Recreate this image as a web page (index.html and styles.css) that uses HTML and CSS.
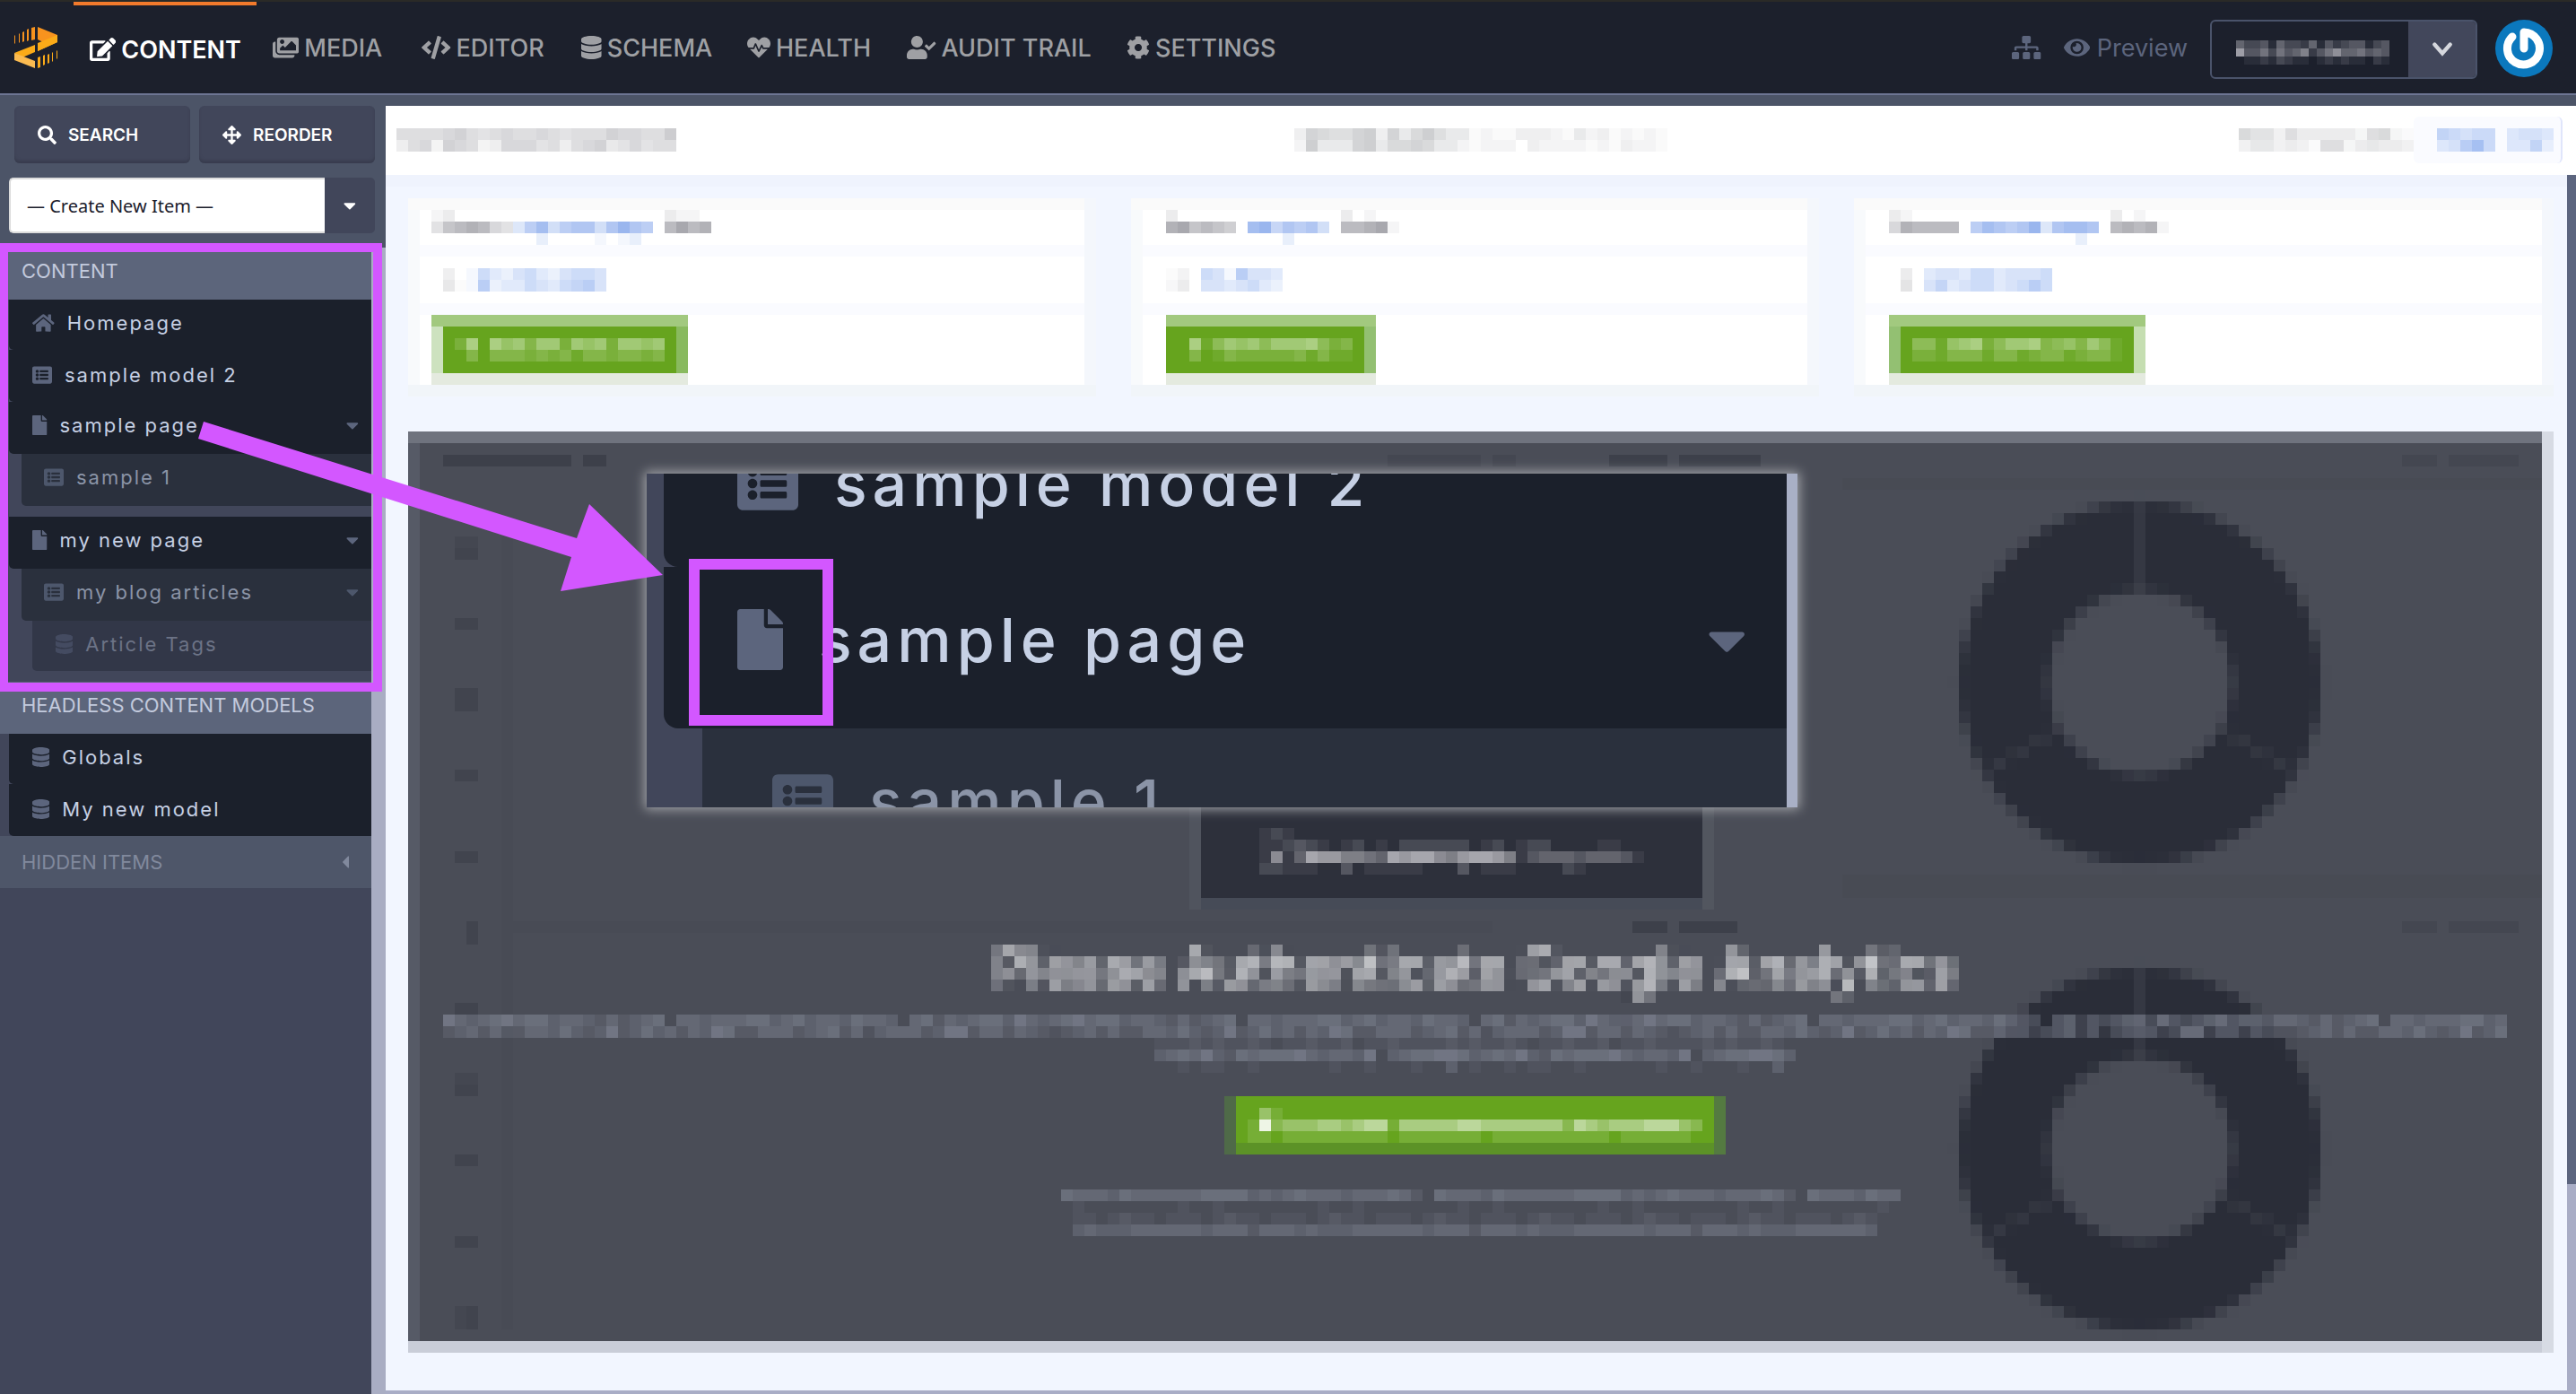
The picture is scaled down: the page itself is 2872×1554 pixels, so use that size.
FILE: index.html
```html
<!DOCTYPE html>
<html lang="en">
<head>
<meta charset="utf-8">
<meta name="viewport" content="width=device-width, initial-scale=1">
<title>Content</title>
<link rel="stylesheet" href="styles.css">
<script src="mosaic.js" defer></script>
</head>
<body>

<svg class="sprite" aria-hidden="true">
  <defs>
    <symbol id="i-edit" viewBox="0 0 576 512"><path d="M402.6 83.2l90.2 90.2c3.8 3.8 3.8 10 0 13.8L274.4 405.6l-92.8 10.3c-12.4 1.4-22.9-9.1-21.5-21.5l10.3-92.8L388.8 83.2c3.8-3.8 10-3.8 13.8 0zm162-22.9l-48.8-48.8c-15.2-15.2-39.9-15.2-55.2 0l-35.4 35.4c-3.8 3.8-3.8 10 0 13.8l90.2 90.2c3.8 3.8 10 3.8 13.8 0l35.4-35.4c15.2-15.3 15.2-40 0-55.2zM384 346.2V448H64V128h229.8c3.2 0 6.2-1.3 8.5-3.5l40-40c7.6-7.6 2.2-20.5-8.5-20.5H48C21.5 64 0 85.5 0 112v352c0 26.5 21.5 48 48 48h352c26.5 0 48-21.5 48-48V306.2c0-10.7-12.9-16-20.5-8.5l-40 40c-2.2 2.3-3.5 5.3-3.5 8.5z"/></symbol>
    <symbol id="i-images" viewBox="0 0 576 512"><path d="M480 416v16c0 26.51-21.49 48-48 48H48c-26.51 0-48-21.49-48-48V176c0-26.51 21.49-48 48-48h16v208c0 44.112 35.888 80 80 80h336zm96-80V80c0-26.51-21.49-48-48-48H144c-26.51 0-48 21.49-48 48v256c0 26.51 21.49 48 48 48h384c26.51 0 48-21.49 48-48zM256 128c0 26.51-21.49 48-48 48s-48-21.49-48-48 21.49-48 48-48 48 21.49 48 48zm-96 144l55.515-55.515c4.686-4.686 12.284-4.686 16.971 0L272 256l135.515-135.515c4.686-4.686 12.284-4.686 16.971 0L512 208v112H160v-48z"/></symbol>
    <symbol id="i-code" viewBox="0 0 640 512"><path d="M278.9 511.5l-61-17.7c-6.4-1.8-10-8.5-8.2-14.9L346.2 8.7c1.8-6.4 8.5-10 14.9-8.2l61 17.7c6.4 1.8 10 8.5 8.2 14.9L293.8 503.3c-1.9 6.4-8.5 10.1-14.9 8.2zm-114-112.2l43.5-46.4c4.6-4.9 4.3-12.7-.8-17.2L117 256l90.6-79.7c5.1-4.5 5.5-12.3.8-17.2l-43.5-46.4c-4.5-4.8-12.1-5.1-17-.5L3.8 247.2c-5.1 4.7-5.1 12.8 0 17.5l144.1 135.1c4.9 4.6 12.5 4.4 17-.5zm327.2.6l144.1-135.1c5.1-4.7 5.1-12.8 0-17.5L492.1 112.1c-4.8-4.5-12.4-4.3-17 .5L431.6 159c-4.6 4.9-4.3 12.7.8 17.2L523 256l-90.6 79.7c-5.1 4.5-5.5 12.3-.8 17.2l43.5 46.4c4.5 4.9 12.1 5.1 17 .6z"/></symbol>
    <symbol id="i-database" viewBox="0 0 448 512"><path d="M448 73.143v45.714C448 159.143 347.667 192 224 192S0 159.143 0 118.857V73.143C0 32.857 100.333 0 224 0s224 32.857 224 73.143zM448 176v102.857C448 319.143 347.667 352 224 352S0 319.143 0 278.857V176c48.125 33.143 136.208 48.572 224 48.572S399.874 209.143 448 176zm0 160v102.857C448 479.143 347.667 512 224 512S0 479.143 0 438.857V336c48.125 33.143 136.208 48.572 224 48.572S399.874 369.143 448 336z"/></symbol>
    <symbol id="i-heartbeat" viewBox="0 0 512 512"><path d="M320.2 243.8l-49.7 99.4c-6 12.1-23.4 11.7-28.9-.6l-56.9-126.3-30 71.7H60.6l182.5 186.5c7.1 7.3 18.6 7.3 25.7 0L451.4 288H342.3l-22.1-44.2zM473.7 73.9l-2.4-2.5c-51.5-52.6-135.8-52.6-187.4 0L256 100l-27.9-28.5c-51.5-52.7-135.9-52.7-187.4 0l-2.4 2.4C-10.4 123.7-12.5 203 31 256h102.4l35.9-86.2c5.4-12.9 23.6-13.1 29.4-.3l58.2 129.3 49-97.9c5.9-11.8 22.7-11.8 28.6 0l27.6 55.2H481c43.5-53 41.4-132.3-7.3-182.2z"/></symbol>
    <symbol id="i-usercheck" viewBox="0 0 640 512"><path d="M224 256c70.7 0 128-57.3 128-128S294.7 0 224 0 96 57.3 96 128s57.3 128 128 128zm89.6 32h-16.7c-22.2 10.2-46.9 16-72.9 16s-50.6-5.8-72.9-16h-16.7C60.2 288 0 348.2 0 422.4V464c0 26.5 21.5 48 48 48h352c26.5 0 48-21.5 48-48v-41.6c0-74.2-60.2-134.4-134.4-134.4zm323-128.4l-27.8-28.1c-4.6-4.7-12.1-4.7-16.8-.1l-104.8 104-45.5-45.8c-4.6-4.7-12.1-4.7-16.8-.1l-28.1 27.9c-4.7 4.6-4.7 12.1-.1 16.8l81.7 82.3c4.6 4.7 12.1 4.7 16.8.1l141.3-140.2c4.6-4.7 4.7-12.2.1-16.8z"/></symbol>
    <symbol id="i-cog" viewBox="0 0 512 512"><path d="M487.4 315.7l-42.6-24.6c4.3-23.2 4.3-47 0-70.2l42.6-24.6c4.9-2.8 7.1-8.6 5.5-14-11.1-35.6-30-67.8-54.7-94.6-3.8-4.1-10-5.1-14.8-2.3L380.8 110c-17.9-15.4-38.5-27.3-60.8-35.1V25.8c0-5.6-3.9-10.5-9.4-11.7-36.7-8.2-74.3-7.8-109.2 0-5.5 1.2-9.4 6.1-9.4 11.7V75c-22.2 7.9-42.8 19.8-60.8 35.1L88.7 85.5c-4.9-2.8-11-1.9-14.8 2.3-24.7 26.7-43.6 58.9-54.7 94.6-1.7 5.4.6 11.2 5.5 14L67.3 221c-4.3 23.2-4.3 47 0 70.2l-42.6 24.6c-4.9 2.8-7.1 8.6-5.5 14 11.1 35.6 30 67.8 54.7 94.6 3.8 4.1 10 5.1 14.8 2.3l42.6-24.6c17.9 15.4 38.5 27.3 60.8 35.1v49.2c0 5.6 3.9 10.5 9.4 11.7 36.7 8.2 74.3 7.8 109.2 0 5.5-1.2 9.4-6.1 9.4-11.7v-49.2c22.2-7.9 42.8-19.8 60.8-35.1l42.6 24.6c4.9 2.8 11 1.9 14.8-2.3 24.7-26.7 43.6-58.9 54.7-94.6 1.5-5.5-.7-11.3-5.6-14.1zM256 336c-44.1 0-80-35.9-80-80s35.9-80 80-80 80 35.9 80 80-35.9 80-80 80z"/></symbol>
    <symbol id="i-sitemap" viewBox="0 0 640 512"><path d="M128 352H32c-17.67 0-32 14.33-32 32v96c0 17.67 14.33 32 32 32h96c17.67 0 32-14.33 32-32v-96c0-17.67-14.33-32-32-32zm-24-80h192v48h48v-48h192v48h48v-57.59c0-21.17-17.23-38.41-38.41-38.41H344v-64h40c17.67 0 32-14.33 32-32V32c0-17.67-14.33-32-32-32H256c-17.67 0-32 14.33-32 32v96c0 17.67 14.33 32 32 32h40v64H94.41C73.23 224 56 241.23 56 262.41V320h48v-48zm264 80h-96c-17.67 0-32 14.33-32 32v96c0 17.67 14.33 32 32 32h96c17.67 0 32-14.33 32-32v-96c0-17.67-14.33-32-32-32zm240 0h-96c-17.67 0-32 14.33-32 32v96c0 17.67 14.33 32 32 32h96c17.67 0 32-14.33 32-32v-96c0-17.67-14.33-32-32-32z"/></symbol>
    <symbol id="i-eye" viewBox="0 0 576 512"><path d="M572.52 241.4C518.29 135.59 410.93 64 288 64S57.68 135.64 3.48 241.41a32.35 32.35 0 0 0 0 29.19C57.71 376.41 165.07 448 288 448s230.32-71.64 284.52-177.41a32.35 32.35 0 0 0 0-29.19zM288 400a144 144 0 1 1 144-144 143.93 143.93 0 0 1-144 144zm0-240a95.31 95.31 0 0 0-25.31 3.79 47.85 47.85 0 0 1-66.9 66.9A95.78 95.78 0 1 0 288 160z"/></symbol>
    <symbol id="i-home" viewBox="0 0 576 512"><path d="M280.37 148.26L96 300.11V464a16 16 0 0 0 16 16l112.06-.29a16 16 0 0 0 15.92-16V368a16 16 0 0 1 16-16h64a16 16 0 0 1 16 16v95.64a16 16 0 0 0 16 16.05L464 480a16 16 0 0 0 16-16V300L295.67 148.26a12.19 12.19 0 0 0-15.3 0zM571.6 251.47L488 182.56V44.05a12 12 0 0 0-12-12h-56a12 12 0 0 0-12 12v72.61L318.47 43a48 48 0 0 0-61 0L4.34 251.47a12 12 0 0 0-1.6 16.9l25.5 31A12 12 0 0 0 45.15 301l235.22-193.74a12.19 12.19 0 0 1 15.3 0L530.9 301a12 12 0 0 0 16.9-1.6l25.5-31a12 12 0 0 0-1.7-16.93z"/></symbol>
    <symbol id="i-list" viewBox="0 0 512 512"><path d="M464 480H48c-26.51 0-48-21.49-48-48V80c0-26.51 21.49-48 48-48h416c26.51 0 48 21.49 48 48v352c0 26.51-21.49 48-48 48zM128 120c-22.091 0-40 17.909-40 40s17.909 40 40 40 40-17.909 40-40-17.909-40-40-40zm0 96c-22.091 0-40 17.909-40 40s17.909 40 40 40 40-17.909 40-40-17.909-40-40-40zm0 96c-22.091 0-40 17.909-40 40s17.909 40 40 40 40-17.909 40-40-17.909-40-40-40zm288-136v-32c0-6.627-5.373-12-12-12H204c-6.627 0-12 5.373-12 12v32c0 6.627 5.373 12 12 12h200c6.627 0 12-5.373 12-12zm0 96v-32c0-6.627-5.373-12-12-12H204c-6.627 0-12 5.373-12 12v32c0 6.627 5.373 12 12 12h200c6.627 0 12-5.373 12-12zm0 96v-32c0-6.627-5.373-12-12-12H204c-6.627 0-12 5.373-12 12v32c0 6.627 5.373 12 12 12h200c6.627 0 12-5.373 12-12z"/></symbol>
    <symbol id="i-file" viewBox="0 0 384 512"><path d="M224 136V0H24C10.7 0 0 10.7 0 24v464c0 13.3 10.7 24 24 24h336c13.3 0 24-10.7 24-24V160H248c-13.2 0-24-10.8-24-24zm160-14.1v6.1H256V0h6.1c6.4 0 12.5 2.5 17 7l97.9 98c4.5 4.5 7 10.6 7 16.9z"/></symbol>
    <symbol id="i-search" viewBox="0 0 512 512"><path d="M505 442.7L405.3 343c-4.5-4.5-10.6-7-17-7H372c27.6-35.3 44-79.7 44-128C416 93.1 322.9 0 208 0S0 93.1 0 208s93.1 208 208 208c48.3 0 92.7-16.4 128-44v16.3c0 6.4 2.5 12.5 7 17l99.7 99.7c9.4 9.4 24.6 9.4 33.9 0l28.3-28.3c9.4-9.4 9.4-24.6.1-34zM208 336c-70.7 0-128-57.2-128-128 0-70.7 57.2-128 128-128 70.7 0 128 57.2 128 128 0 70.7-57.2 128-128 128z"/></symbol>
    <symbol id="i-arrows" viewBox="0 0 512 512"><path d="M352.201 425.775l-79.196 79.196c-9.373 9.373-24.568 9.373-33.941 0l-79.196-79.196c-15.119-15.119-4.411-40.971 16.971-40.97h51.162L228 284H127.196v51.162c0 21.382-25.851 32.09-40.971 16.971L7.029 272.937c-9.373-9.373-9.373-24.569 0-33.941L86.225 159.8c15.119-15.119 40.971-4.411 40.971 16.971V228H228V127.196h-51.23c-21.382 0-32.09-25.851-16.971-40.971l79.196-79.196c9.373-9.373 24.568-9.373 33.941 0l79.196 79.196c15.119 15.119 4.411 40.971-16.971 40.971h-51.162V228h100.804v-51.162c0-21.382 25.851-32.09 40.97-16.971l79.196 79.196c9.373 9.373 9.373 24.569 0 33.941L425.773 352.2c-15.119 15.119-40.971 4.411-40.97-16.971V284H284v100.804h51.23c21.382 0 32.09 25.851 16.971 40.971z"/></symbol>
    <symbol id="i-caret" viewBox="0 0 320 512"><path d="M31.3 192h257.3c17.8 0 26.7 21.5 14.1 34.1L174.1 354.7c-7.8 7.8-20.5 7.8-28.3 0L17.2 226.1C4.6 213.5 13.5 192 31.3 192z"/></symbol>
    <symbol id="i-caretleft" viewBox="0 0 192 512"><path d="M192 127.338v257.324c0 17.818-21.543 26.741-34.142 14.142L29.196 270.142c-7.81-7.81-7.81-20.474 0-28.284l128.662-128.662c12.599-12.6 34.142-3.676 34.142 14.142z"/></symbol>
    <filter id="pixelate" x="0" y="0" width="1" height="1" primitiveUnits="userSpaceOnUse" color-interpolation-filters="sRGB">
      <feGaussianBlur in="SourceGraphic" stdDeviation="3" result="soft"/>
      <feFlood x="6" y="6" width="1" height="1" flood-color="#000"/>
      <feComposite x="0" y="0" width="13" height="13"/>
      <feTile result="dots"/>
      <feComposite in="soft" in2="dots" operator="in"/>
      <feMorphology operator="dilate" radius="6"/>
    </filter>
  </defs>
</svg>

<header class="topbar">
  <a class="logo" href="#" aria-label="Home">
    <svg viewBox="0 0 48 46" aria-hidden="true">
      <path fill="#f7931e" d="M26 0l22 9v1L32 17l-6-3z"/>
      <path fill="#fbab18" d="M48 9v8L26 27v-8l10-4zM23 20v8L9 34 0 29z"/>
      <path fill="#fbab18" d="M48 9v8L26 27v-9z"/>
      <path fill="#fbbb51" d="M0 29l23 9v8L0 37z"/>
      <path fill="#f7931e" d="M19 1l4-1v14l-4 1zM14 3l2-1v13l-2 1zM9 6l2-1v11l-2 1zM5 8l1-1v10l-1 1zM0 10l1-1v9l-1 1z"/>
      <path fill="#fbab18" d="M26 34l3-1v12l-3 1zM32 32l2-1v11l-2 1zM37 31l2-1v10l-2 1zM42 29l1-1v10l-1 1zM47 27l1-1v9l-1 1z"/>
    </svg>
  </a>
  <nav class="mainnav">
    <a class="mainnav__item mainnav__item--active" href="#"><svg class="icon icon--576"><use href="#i-edit"/></svg>CONTENT</a>
    <a class="mainnav__item" href="#"><svg class="icon icon--576"><use href="#i-images"/></svg>MEDIA</a>
    <a class="mainnav__item" href="#"><svg class="icon icon--640"><use href="#i-code"/></svg>EDITOR</a>
    <a class="mainnav__item" href="#"><svg class="icon icon--448"><use href="#i-database"/></svg>SCHEMA</a>
    <a class="mainnav__item" href="#"><svg class="icon"><use href="#i-heartbeat"/></svg>HEALTH</a>
    <a class="mainnav__item" href="#"><svg class="icon icon--640"><use href="#i-usercheck"/></svg>AUDIT TRAIL</a>
    <a class="mainnav__item" href="#"><svg class="icon"><use href="#i-cog"/></svg>SETTINGS</a>
  </nav>
  <div class="tools">
    <a class="tools__link" href="#" aria-label="Sitemap"><svg class="icon icon--640"><use href="#i-sitemap"/></svg></a>
    <a class="tools__link" href="#"><svg class="icon icon--576"><use href="#i-eye"/></svg>Preview</a>
    <button class="instance" type="button" aria-label="Switch instance">
      <span class="instance__name"><canvas class="mosaic" data-cell="9" data-ink="#9d9da6" data-rows="5334153325142344134|9446364572468556454|0112132110121211021"></canvas></span>
      <span class="instance__arrow"><svg viewBox="0 0 22 16" aria-hidden="true"><path d="M3 3l8 9 8-9"/></svg></span>
    </button>
    <a class="avatar" href="#" aria-label="Account"><svg viewBox="0 0 64 64" aria-hidden="true"><circle cx="32" cy="32" r="32" fill="#0b78bd"/><path d="M32 32V14a18 18 0 1 1-13 5" fill="none" stroke="#fff" stroke-width="9" stroke-linecap="round" stroke-linejoin="round"/></svg></a>
  </div>
</header>

<div class="layout">
  <aside class="sidebar">
    <div class="actions">
      <button class="action" type="button"><svg class="icon"><use href="#i-search"/></svg>SEARCH</button>
      <button class="action" type="button"><svg class="icon"><use href="#i-arrows"/></svg>REORDER</button>
    </div>
    <label class="create">
      <select class="create__select" aria-label="Create new item"><option>— Create New Item —</option></select>
      <span class="create__arrow"><svg class="icon icon--320"><use href="#i-caret"/></svg></span>
    </label>
    <div class="navscroll">
      <nav class="tree">
        <h2 class="tree__title">CONTENT</h2>
        <ul class="tree__list tree__list--spaced">
          <li><a class="row row--short" href="#"><svg class="icon icon--576"><use href="#i-home"/></svg>Homepage</a></li>
          <li><a class="row" href="#"><svg class="icon"><use href="#i-list"/></svg>sample model 2</a></li>
          <li><a class="row row--page" href="#"><svg class="icon icon--384"><use href="#i-file"/></svg>sample page<svg class="icon icon--320 row__caret"><use href="#i-caret"/></svg></a>
            <ul class="tree__list tree__list--spaced">
              <li><a class="row row--page row--d1" href="#"><svg class="icon"><use href="#i-list"/></svg>sample 1</a></li>
            </ul>
          </li>
          <li><a class="row row--page" href="#"><svg class="icon icon--384"><use href="#i-file"/></svg>my new page<svg class="icon icon--320 row__caret"><use href="#i-caret"/></svg></a>
            <ul class="tree__list">
              <li><a class="row row--page row--d1" href="#"><svg class="icon"><use href="#i-list"/></svg>my blog articles<svg class="icon icon--320 row__caret"><use href="#i-caret"/></svg></a>
                <ul class="tree__list">
                  <li><a class="row row--short row--d2" href="#"><svg class="icon icon--448"><use href="#i-database"/></svg>Article Tags</a></li>
                </ul>
              </li>
            </ul>
          </li>
        </ul>
        <h2 class="tree__title">HEADLESS CONTENT MODELS</h2>
        <ul class="tree__list">
          <li><a class="row row--short" href="#"><svg class="icon icon--448"><use href="#i-database"/></svg>Globals</a></li>
          <li><a class="row" href="#"><svg class="icon icon--448"><use href="#i-database"/></svg>My new model</a></li>
        </ul>
        <h2 class="tree__title tree__title--hidden">HIDDEN ITEMS<svg class="icon icon--192"><use href="#i-caretleft"/></svg></h2>
      </nav>
    </div>
  </aside>

  <main class="main">
    <div class="crumbs">
      <canvas class="mosaic" data-ink="#cdcdd0" data-rows="666678656766765666877669|367287623777563678457566"></canvas>
      <canvas class="mosaic crumbs__mid" data-ink="#cecfd1" data-rows="38766893847964412113332142312121|29444894778744212220322221213221"></canvas>
      <div class="crumbs__end">
        <canvas class="mosaic" data-ink="#d4d5d7" data-rows="866374444427821|355343177245443"></canvas>
        <span class="crumbs__button"><canvas class="mosaic" data-ink="#fff" data-accent="#a6c0f2" data-rows="fedee0cddc|cdgie0ccfb"></canvas></span>
      </div>
    </div>
    <div class="viewport">
      <div class="dashboard">
        <div class="cards">
          <section class="card">
            <div class="card__head"><canvas class="mosaic" data-ink="#a8a8ae" data-accent="#9ab6ee" data-rows="120000000000000000002110|367874300000000000007978|000000000000000000000000|" data-over="000000000000000000000000|0000000cfhdfggdgigf00000|000000000b0000a0ab000000"></canvas></div>
            <div class="card__body"><canvas class="mosaic" data-ink="#dcdcde" data-accent="#a6c0f2" data-rows="40aecbdecbdeed|61agbccedcefgd"></canvas></div>
            <div class="card__foot"><button class="green green--a" type="button" aria-label="Open"><canvas class="mosaic" data-ink="#bfdba0" data-rows="270756366265626656|030333232313323323"></canvas></button></div>
          </section>
          <section class="card card--inset">
            <div class="card__head"><canvas class="mosaic" data-ink="#a8a8ae" data-accent="#9ab6ee" data-rows="20000000000000020100|8967650hiegfgd077891|0000000000b000000000"></canvas></div>
            <div class="card__body"><canvas class="mosaic" data-ink="#dcdcde" data-accent="#a6c0f2" data-rows="130edagddc|250ddcdecb"></canvas></div>
            <div class="card__foot"><button class="green green--b" type="button" aria-label="Open"><canvas class="mosaic" data-ink="#bfdba0" data-rows="71465646667423|30132222231311"></canvas></button></div>
          </section>
          <section class="card card--inset">
            <div class="card__head"><canvas class="mosaic" data-ink="#a8a8ae" data-accent="#9ab6ee" data-rows="210000000000000000020100|4877770fhgfgicghhg078781|0000000000000000b0000000"></canvas></div>
            <div class="card__body card__body--far"><canvas class="mosaic" data-ink="#dcdcde" data-accent="#a6c0f2" data-rows="50cddceecddde|70dfcdeecdege"></canvas></div>
            <div class="card__foot"><button class="green green--c" type="button" aria-label="Open"><canvas class="mosaic" data-ink="#bfdba0" data-rows="441567246673453641|221333133123312331"></canvas></button></div>
          </section>
        </div>

        <section class="analytics">
          <div class="backdrop" aria-hidden="true">
            <svg class="backdrop__left" viewBox="0 0 1586 1001" preserveAspectRatio="xMinYMin meet">
              <g fill="#3d404a">
                <path d="M26 13h143v13H26zM182 13h26v13h-26z"/>
                <path d="M1326 13h65v13h-65zM1404 13h91v13h-91z"/>
                <path d="M1352 533h39v13h-39zM1404 533h65v13h-65z"/>
                <path d="M1339 637h26v13h-26zM1339 611h13v13h-13z"/>
              </g>
              <g fill="#41444e">
                <path d="M39 117h26v13H39zM39 195h26v13H39zM39 273h26v26H39zM39 364h26v13H39zM39 455h26v13H39zM52 533h13v26H52zM39 624h26v13H39zM39 715h26v13H39zM39 793h26v13H39zM39 884h26v13H39zM52 962h13v26H52z"/>
              </g>
              <g fill="#444751">
                <path d="M39 104h26v13H39zM39 702h26v13H39zM39 962h13v26H39zM1079 13h104v13h-104zM1196 13h26v13h-26z"/>
                <path d="M234 533h13v13h-13zM416 533h26v13h-26zM611 533h13v13h-13zM793 533h13v13h-13z"/>
              </g>
              <g fill="#484b55">
                <path d="M91 104h13v884H91zM104 533h1092v13H104z"/>
              </g>
            </svg>
            <svg class="backdrop__right" viewBox="0 0 780 1001">
              <g fill="#484b54"><path d="M0 39h780v13H0zM0 481h780v26H0z"/></g>
              <g fill="#444751"><path d="M624 13h39v13h-39zM676 13h78v13h-78zM624 533h39v13h-39zM676 533h78v13h-78z"/></g>
              <g class="pixels">
                <rect width="780" height="1001" fill="#4a4d57" fill-opacity="0"/>
                <g fill="none" stroke="#2a2d38" stroke-width="98"><circle cx="332" cy="267" r="152"/><circle cx="332" cy="787" r="152"/></g>
                <g stroke="#4a4d57" stroke-width="3"><path d="M332 166V60M420 318l91 52M244 318l-91 52M332 686V580M420 838l91 52M244 838l-91 52"/></g>
              </g>
            </svg>
          </div>
          <div class="auth">
            <div class="auth__card"><canvas class="mosaic" data-ink="#a6a6ad" data-rows="121000000000000000000000000000000|112321012010222222012012200001100|171498866549899768998613444344431|221110030111110003011100002100000"></canvas></div>
            <h1 class="auth__title">Please Authenticate Google Analytics</h1>
            <canvas class="mosaic" data-cols="177" data-ink="#858a99" data-rows="6434564553443242345044344455345344354430452434553|23424224435323623534243652244423452413444236624424321"></canvas>
            <canvas class="mosaic" data-cols="55" data-ink="#858a99" data-rows="1112121121011211201121|345463254555643443603455665|0010110010000001001000100301"></canvas>
            <button class="green green--wide" type="button" aria-label="Authenticate"><canvas class="mosaic" data-ink="#fff" data-rows="031000000000000000000000000000000000000|182333443455144444554444444254344455532|110111111111011111110111111111101111110"></canvas></button>
            <canvas class="mosaic" data-cols="73" data-ink="#858a99" data-rows="0|05444354444445555343454443444542|001000000001"></canvas>
            <canvas class="mosaic" data-cols="69" data-ink="#858a99" data-rows="110121101|3433344444434442444"></canvas>
          </div>
        </section>
      </div>
      <div class="scrollbar"><div class="scrollbar__thumb"></div></div>
    </div>
  </main>
</div>

<div class="callout" aria-hidden="true"></div>

<figure class="inset">
  <div class="inset__rows">
    <div class="zrow zrow--model"><svg class="icon"><use href="#i-list"/></svg>sample model 2</div>
    <div class="zrow"><svg class="icon icon--384"><use href="#i-file"/></svg>sample page<svg class="icon icon--320 row__caret"><use href="#i-caret"/></svg></div>
    <div class="zrow zrow--d1"><svg class="icon"><use href="#i-list"/></svg>sample 1</div>
  </div>
  <div class="inset__mark"></div>
</figure>

<svg class="pointer" viewBox="0 0 520 192" aria-hidden="true"><path fill="#d357ff" d="M7 0l416 130 14-38 82 79-114 18 12-38L1 19z"/></svg>

</body>
</html>
```

FILE: styles.css
```css
* { box-sizing: border-box; }

body {
  position: relative;
  display: flex;
  flex-direction: column;
  min-height: 100vh;
  margin: 0;
  background: #4c5467;
  font-family: Inter, "Open Sans", sans-serif;
  font-size: 22px;
}

a { color: inherit; text-decoration: none; }
h1, h2 { margin: 0; font-weight: 400; }
ul { margin: 0; padding: 0; list-style: none; }
button { margin: 0; border: 0; font-family: inherit; cursor: pointer; }
.sprite { position: absolute; width: 0; height: 0; }
.mosaic { display: block; flex: none; }

/* Icons are one em tall; the modifier gives the width of the glyph box. */
.icon { flex: none; height: 1em; aspect-ratio: 1; fill: currentColor; }
.icon--640 { aspect-ratio: 640 / 512; }
.icon--576 { aspect-ratio: 576 / 512; }
.icon--448 { aspect-ratio: 448 / 512; }
.icon--384 { aspect-ratio: 384 / 512; }
.icon--320 { aspect-ratio: 320 / 512; }
.icon--192 { aspect-ratio: 192 / 512; }

/* Top bar */
.topbar {
  display: flex;
  align-items: stretch;
  height: 106px;
  padding: 0 26px 0 16px;
  border-top: 2px solid #2a2a27;
  border-bottom: 2px solid #6d7593;
  background: #1c202c;
  font-size: 27px;
}
.topbar .icon { height: 26px; }
.logo { width: 66px; padding-top: 28px; }
.logo svg { display: block; width: 48px; height: 46px; }
.mainnav {
  display: grid;
  grid-template-columns: 204px 166px 178px 185px 178px 245px 198px;
  color: #9fa0a4;
  font-weight: 500;
}
.mainnav__item {
  display: flex;
  align-items: center;
  gap: 6px;
  padding: 0 0 4px 18px;
  border-top: 4px solid transparent;
  white-space: nowrap;
}
.mainnav__item--active { padding-bottom: 0; border-top-color: #f27a2c; color: #fff; font-weight: 600; }
.tools { display: flex; align-items: flex-start; gap: 25px; margin-left: auto; padding-top: 20px; color: #5c657d; }
.tools__link { display: flex; align-items: center; gap: 8px; height: 62px; }
.instance {
  display: flex;
  width: 298px;
  height: 66px;
  padding: 0;
  overflow: hidden;
  border: 2px solid #4a536a;
  border-radius: 6px;
  background: transparent;
}
.instance__name { flex: 1; padding: 21px 0 0 27px; }
.instance__arrow { display: flex; align-items: center; justify-content: center; width: 75px; height: 62px; background: #42475b; }
.instance__arrow svg { width: 24px; height: 18px; fill: none; stroke: #d5d7dd; stroke-width: 4; stroke-linecap: round; }
.avatar { width: 64px; height: 64px; margin-left: -5px; }
.avatar svg { display: block; }

/* Page body */
.layout { display: grid; flex: 1; grid-template-columns: 430px 1fr; padding-top: 12px; }

/* Sidebar */
.sidebar { display: flex; flex-direction: column; }
.actions { display: grid; grid-template-columns: 1fr 1fr; gap: 10px; padding: 0 12px 0 16px; }
.action {
  display: flex;
  align-items: center;
  gap: 13px;
  height: 64px;
  padding: 0 0 0 26px;
  border-radius: 6px;
  background: #41465a;
  box-shadow: inset 0 -3px 3px #393d4f;
  color: #fff;
  font-size: 19px;
  font-weight: 600;
}
.action .icon { height: 21px; }
.create { display: flex; height: 62px; margin: 16px 12px 16px 10px; }
.create__select {
  flex: 1;
  padding: 0 18px;
  border: 2px solid #dcdcdc;
  border-right: 0;
  border-radius: 5px 0 0 5px;
  background: #fff;
  color: #1c202c;
  font-family: "Noto Sans", sans-serif;
  font-size: 20px;
  appearance: none;
}
.create__arrow { display: flex; align-items: center; justify-content: center; width: 56px; border-radius: 0 5px 5px 0; background: #41465a; color: #fff; }
.navscroll { flex: 1; border-right: 16px solid #a9adc3; background: #41465a; }
.tree__title {
  display: flex;
  align-items: center;
  justify-content: space-between;
  height: 58px;
  padding: 0 25px 6px 24px;
  background: #5c657b;
  color: #c3cadd;
  font-size: 22px;
}
.tree__title--hidden { padding-bottom: 0; background: #4e5669; color: #81899d; }
.tree__list--spaced { padding-bottom: 12px; }
.row {
  display: flex;
  align-items: center;
  gap: 14px;
  height: 58px;
  margin-left: 10px;
  padding: 0 14px 3px 26px;
  border-radius: 0 0 0 5px;
  background: #1b202b;
  color: #c6d0e4;
  letter-spacing: 2px;
}
.row .icon { color: #5c657d; }
.row--short { height: 56px; padding-bottom: 4px; }
.row--page { padding-bottom: 6px; }
.row__caret { margin-left: auto; }
.row--d1 { margin-left: 24px; padding-left: 25px; background: #2a303d; color: #8b94a7; }
.row--d1 .icon { color: #4d576c; }
.row--d2 { margin-left: 36px; background: #323748; color: #6c7386; }
.row--d2 .icon { color: #444b61; }

/* Main column */
.main { display: flex; flex-direction: column; border-bottom: 4px solid #a9adc6; background: #f2f6ff; }
.crumbs { display: flex; align-items: flex-start; justify-content: space-between; height: 77px; padding: 12px 15px 0 12px; background: #fff; }
.crumbs > .mosaic { margin-top: 13px; }
.crumbs > .crumbs__mid { margin-left: 52px; }
.crumbs__end { display: flex; align-items: center; }
.crumbs__button { display: flex; align-items: center; height: 52px; padding: 0 8px 0 26px; border-right: 2px solid #e0e5fb; border-radius: 6px; background: #fafbff; }
.viewport { display: flex; flex: 1; }
.dashboard { flex: 1; min-width: 0; padding: 13px 15px 42px 25px; border-top: 13px solid #eff3fd; }
.scrollbar { width: 10px; background: #a9adc6; }
.scrollbar__thumb { height: 83%; background: #5c657f; }

/* Shortcut cards; the soft edges are 13px bands drawn as inset shadows */
.cards { display: grid; grid-template-columns: 767fr 767fr 780fr; gap: 39px; }
.card {
  padding: 13px;
  background: #fff;
  box-shadow: inset 0 -13px #f1f5f9, inset -13px 0 #f4f7fc, inset 0 13px #fafafa, inset 13px 0 #f8fafc;
}
.card__head { height: 52px; padding-left: 13px; border-bottom: 13px solid #fafbff; }
.card__body { height: 65px; padding: 13px 0 0 26px; border-bottom: 13px solid #fafbff; }
.card__foot { padding-left: 13px; }
.card--inset .card__head,
.card--inset .card__body,
.card--inset .card__foot { padding-left: 26px; }
.card--inset .card__body--far { padding-left: 39px; }

.green {
  display: flex;
  align-items: flex-start;
  height: 78px;
  padding: 26px 0 0 26px;
  background: #66a41e;
}
.green--a { width: 286px; box-shadow: inset 0 -13px #e4eadf, inset 0 13px #a2c97f, inset 13px 0 #cde2bf, inset -13px 0 #89ba5f; }
.green--b { width: 234px; box-shadow: inset 0 -13px #e4eadf, inset 0 13px #a2c97f, inset -13px 0 #93c072; }
.green--c { width: 286px; box-shadow: inset 0 -13px #e4eadf, inset 0 13px #a2c97f, inset 13px 0 #93c072, inset -13px 0 #c5deb1; }
.green--wide { width: 559px; height: 65px; padding-top: 13px; box-shadow: inset 13px 0 #4f6a48, inset -13px 0 #547a41, inset 0 -13px #5c9227; }

/* Analytics panel */
.analytics {
  position: relative;
  margin-top: 39px;
  padding: 13px;
  background: #4a4d57;
  box-shadow: inset -13px 0 #d7dbe4, inset 0 -13px #c9cdd8, inset 0 13px #6f737e, inset 13px 0 #565a66;
}
.backdrop { position: absolute; inset: 13px; display: flex; justify-content: space-between; overflow: hidden; }
.backdrop__left { flex: none; width: 1586px; height: 1001px; }
.backdrop__right { flex: none; width: 780px; height: 1001px; }
.pixels { filter: url(#pixelate); }
.auth { position: relative; display: flex; flex-direction: column; align-items: center; padding: 325px 13px 117px 0; }
.auth__card {
  width: 585px;
  height: 195px;
  margin: 0 52px 39px 0;
  padding: 104px 0 0 78px;
  background: #2d303b;
  box-shadow: inset 13px 0 #50545e, inset -13px 0 #52565f, inset 0 -13px #464b57;
}
.auth__title { width: 1079px; height: 78px; color: #d0d1d4; font-size: 59px; font-weight: 600; line-height: 52px; text-align: center; white-space: nowrap; filter: url(#pixelate); }
.auth .green--wide { margin: 26px 0; }

/* Annotations laid over the page */
.callout { position: absolute; top: 271px; left: -1px; width: 427px; height: 500px; border: 10px solid #d357ff; }
.pointer { position: absolute; top: 470px; left: 220px; width: 520px; height: 192px; }
.inset {
  position: absolute;
  top: 528px;
  left: 721px;
  width: 1283px;
  height: 372px;
  margin: 0;
  overflow: hidden;
  border-right: 12px solid #a9b0c6;
  background: #41465a;
  box-shadow: 0 0 12px 2px #a5a7ac;
}
.inset__rows { display: flex; flex-direction: column; justify-content: center; height: 100%; padding-top: 16px; }
.zrow {
  display: flex;
  flex: none;
  align-items: center;
  gap: 40px;
  height: 180px;
  margin-left: 19px;
  padding: 0 46px 18px 82px;
  border-radius: 0 0 0 16px;
  background: #1b202b;
  color: #c6d0e4;
  font-size: 68px;
  font-weight: 500;
  letter-spacing: 6px;
}
.zrow .icon { color: #5c657d; }
.zrow--model { padding-bottom: 6px; }
.zrow--d1 { margin-left: 62px; padding-left: 78px; background: #2a303d; color: #8b94a7; }
.zrow--d1 .icon { color: #4d576c; }
.inset__mark { position: absolute; top: 95px; left: 47px; width: 161px; height: 186px; border: 12px solid #d357ff; }
```

FILE: mosaic.js
```js
// Draws redacted text as a grid of blocks.
// Digits are opacity steps of data-ink, letters a-i of data-accent.
document.querySelectorAll('canvas.mosaic').forEach(function (canvas) {
  var set = canvas.dataset;
  var cell = Number(set.cell || 13);
  var rows = set.rows.split('|').filter(Boolean);
  var cols = Number(set.cols || rows[0].length);
  canvas.width = cols * cell;
  canvas.height = rows.length * cell;
  var ctx = canvas.getContext('2d');

  function paint(lines) {
    lines.forEach(function (line, y) {
      for (var x = 0; x < cols; x++) {
        var mark = line[x % line.length];
        var letter = mark >= 'a';
        var step = letter ? mark.charCodeAt(0) - 96 : Number(mark);
        ctx.globalAlpha = step / 9;
        ctx.fillStyle = letter ? set.accent : set.ink;
        ctx.fillRect(x * cell, y * cell, cell, cell);
      }
    });
  }

  paint(rows);
  if (set.over) paint(set.over.split('|'));
});
```
